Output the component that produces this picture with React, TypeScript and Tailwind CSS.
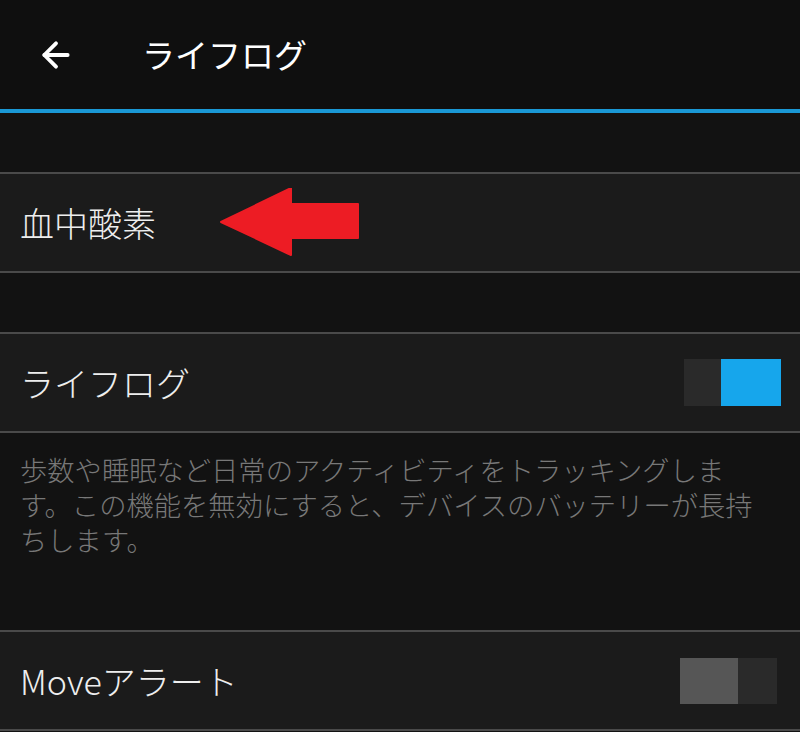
import { ArrowLeft } from "lucide-react";

const font = { fontFamily: '"Noto Sans CJK JP", "Noto Sans", sans-serif' };

const Divider = () => <div className="h-[2px] bg-[#4a4a4a]" />;

const Toggle = ({ on }: { on: boolean }) =>
  on ? (
    <div className="flex h-[47px]">
      <div className="w-[37px] bg-[#2a2a2a]" />
      <div className="w-[60px] bg-[#16a6ec]" />
    </div>
  ) : (
    <div className="flex h-[46px]">
      <div className="w-[58px] bg-[#565656]" />
      <div className="w-[39px] bg-[#2a2a2a]" />
    </div>
  );

const RedArrow = () => (
  <svg width="140" height="70" viewBox="0 0 140 70" className="ml-[64px]">
    <polygon
      points="1,34 71,0 71,16 138,16 138,50 71,50 71,67"
      fill="#ed1c24"
      strokeLinejoin="round"
      stroke="#ed1c24"
      strokeWidth="2"
    />
  </svg>
);

export default function App() {
  return (
    <div className="w-[800px] h-[732px] overflow-hidden bg-[#121212] text-white" style={font}>
      <header className="h-[109px] bg-[#0f0f0f] flex items-center">
        <ArrowLeft className="ml-[36px] w-[40px] h-[40px]" strokeWidth={2.3} />
        <h1 className="ml-[66px] text-[33px] font-normal">ライフログ</h1>
      </header>
      <div className="h-[4px] bg-[#1a98d5]" />
      <div className="h-[59px]" />
      <Divider />
      <div className="h-[97px] bg-[#1b1b1b] flex items-center pl-[20px]">
        <span className="text-[34px] font-light text-[#eeeeee]">血中酸素</span>
        <RedArrow />
      </div>
      <Divider />
      <div className="h-[59px]" />
      <Divider />
      <div className="h-[97px] bg-[#1b1b1b] flex items-center justify-between pl-[20px] pr-[19px]">
        <span className="text-[34px] font-light text-[#eeeeee]">ライフログ</span>
        <Toggle on />
      </div>
      <Divider />
      <div className="h-[197px] pl-[20px] pr-[32px] pt-[19px]">
        <p className="text-[27.3px] leading-[35px] font-light text-[#787878]">
          歩数や睡眠など日常のアクティビティをトラッキングします。この機能を無効にすると、デバイスのバッテリーが長持ちします。
        </p>
      </div>
      <Divider />
      <div className="h-[97px] bg-[#1b1b1b] flex items-center justify-between pl-[20px] pr-[23px]">
        <span className="text-[34px] font-light text-[#eeeeee]">Moveアラート</span>
        <Toggle on={false} />
      </div>
      <Divider />
    </div>
  );
}
